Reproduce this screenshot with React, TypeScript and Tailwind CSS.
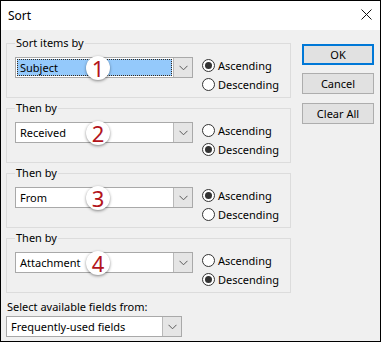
import React from "react";

type Group = {
  label: string;
  value: string;
  badge: string;
  asc: boolean;
  selected?: boolean;
};

const groups: Group[] = [
  { label: "Sort items by", value: "Subject", badge: "1", asc: true, selected: true },
  { label: "Then by", value: "Received", badge: "2", asc: false },
  { label: "Then by", value: "From", badge: "3", asc: true },
  { label: "Then by", value: "Attachment", badge: "4", asc: false },
];

function Chevron() {
  return (
    <svg width="9" height="6" viewBox="0 0 9 6">
      <path d="M0.5 0.8 L4.5 4.8 L8.5 0.8" fill="none" stroke="#5a5a5a" strokeWidth="1" />
    </svg>
  );
}

function Combo({
  value,
  selected,
  badge,
  width,
}: {
  value: string;
  selected?: boolean;
  badge?: string;
  width: string;
}) {
  return (
    <div className={`relative h-[21px] ${width} shrink-0 border border-[#a9a9a9] bg-white flex items-stretch`}>
      <div className="flex-1 p-[1px] flex">
        <div
          className={
            selected
              ? "flex-1 flex items-center pl-[2px] bg-[#94c9fb] border border-dotted border-[#3a2a1a]"
              : "flex-1 flex items-center pl-[3px]"
          }
        >
          {value}
        </div>
      </div>
      <div className="w-[19px] border-l border-[#b9b9b9] bg-[#e5e5e5] flex items-center justify-center">
        <Chevron />
      </div>
      {badge && (
        <div className="absolute left-[70px] top-[-2px] w-[24px] h-[24px] rounded-full bg-white shadow-[0_1px_3px_rgba(0,0,0,0.45)] flex items-center justify-center text-[22px] leading-none text-[#b3141b]">
          {badge}
        </div>
      )}
    </div>
  );
}

function Radio({ checked, label }: { checked: boolean; label: string }) {
  return (
    <div className="h-[19px] flex items-center gap-[3px]">
      <div className="w-[13px] h-[13px] rounded-full border border-[#333] bg-white flex items-center justify-center">
        {checked && <div className="w-[7px] h-[7px] rounded-full bg-[#333]" />}
      </div>
      <span>{label}</span>
    </div>
  );
}

export default function App() {
  return (
    <div className="w-[381px] h-[342px] border border-black bg-[#f0f0f0] flex flex-col text-[11px] text-[#000] font-['Noto_Sans',sans-serif] leading-[16px]">
      {/* title bar */}
      <div className="h-[29px] bg-white flex items-center justify-between pl-[7px] pr-[8px]">
        <span className="text-[12px]">Sort</span>
        <svg width="11" height="11" viewBox="0 0 11 11" className="mb-[2px]">
          <path d="M0.5 0.5 L10.5 10.5 M10.5 0.5 L0.5 10.5" stroke="#111" strokeWidth="1" />
        </svg>
      </div>

      <div className="flex">
        <div className="pl-[5px] pt-[5px] w-[290px] flex flex-col">
          {groups.map((g, i) => (
            <fieldset
              key={i}
              className={`h-[63px] w-[285px] border border-[#dcdcdc] pl-[8px] pt-[6px] ${i > 0 ? "mt-[2px]" : ""}`}
            >
              <legend className="px-[1px] leading-[16px]">{g.label}</legend>
              <div className="flex items-start">
                <Combo value={g.value} selected={g.selected} badge={g.badge} width="w-[178px]" />
                <div className="ml-[9px] mt-[-1px] flex flex-col">
                  <Radio checked={g.asc} label="Ascending" />
                  <Radio checked={!g.asc} label="Descending" />
                </div>
              </div>
            </fieldset>
          ))}

          <div className="mt-[6px] pl-[1px]">Select available fields from:</div>
          <div className="mt-[1px]">
            <Combo value="Frequently-used fields" width="w-[176px]" />
          </div>
        </div>

        <div className="ml-[11px] mt-[14px] flex flex-col">
          <button className="w-[72px] h-[21px] bg-[#e1e1e1] border-2 border-[#0078d7] flex items-center justify-center">
            OK
          </button>
          <button className="mt-[8px] w-[72px] h-[21px] bg-[#e1e1e1] border border-[#adadad] flex items-center justify-center">
            Cancel
          </button>
          <button className="mt-[9px] w-[72px] h-[21px] bg-[#e1e1e1] border border-[#adadad] flex items-center justify-center">
            Clear All
          </button>
        </div>
      </div>
    </div>
  );
}
